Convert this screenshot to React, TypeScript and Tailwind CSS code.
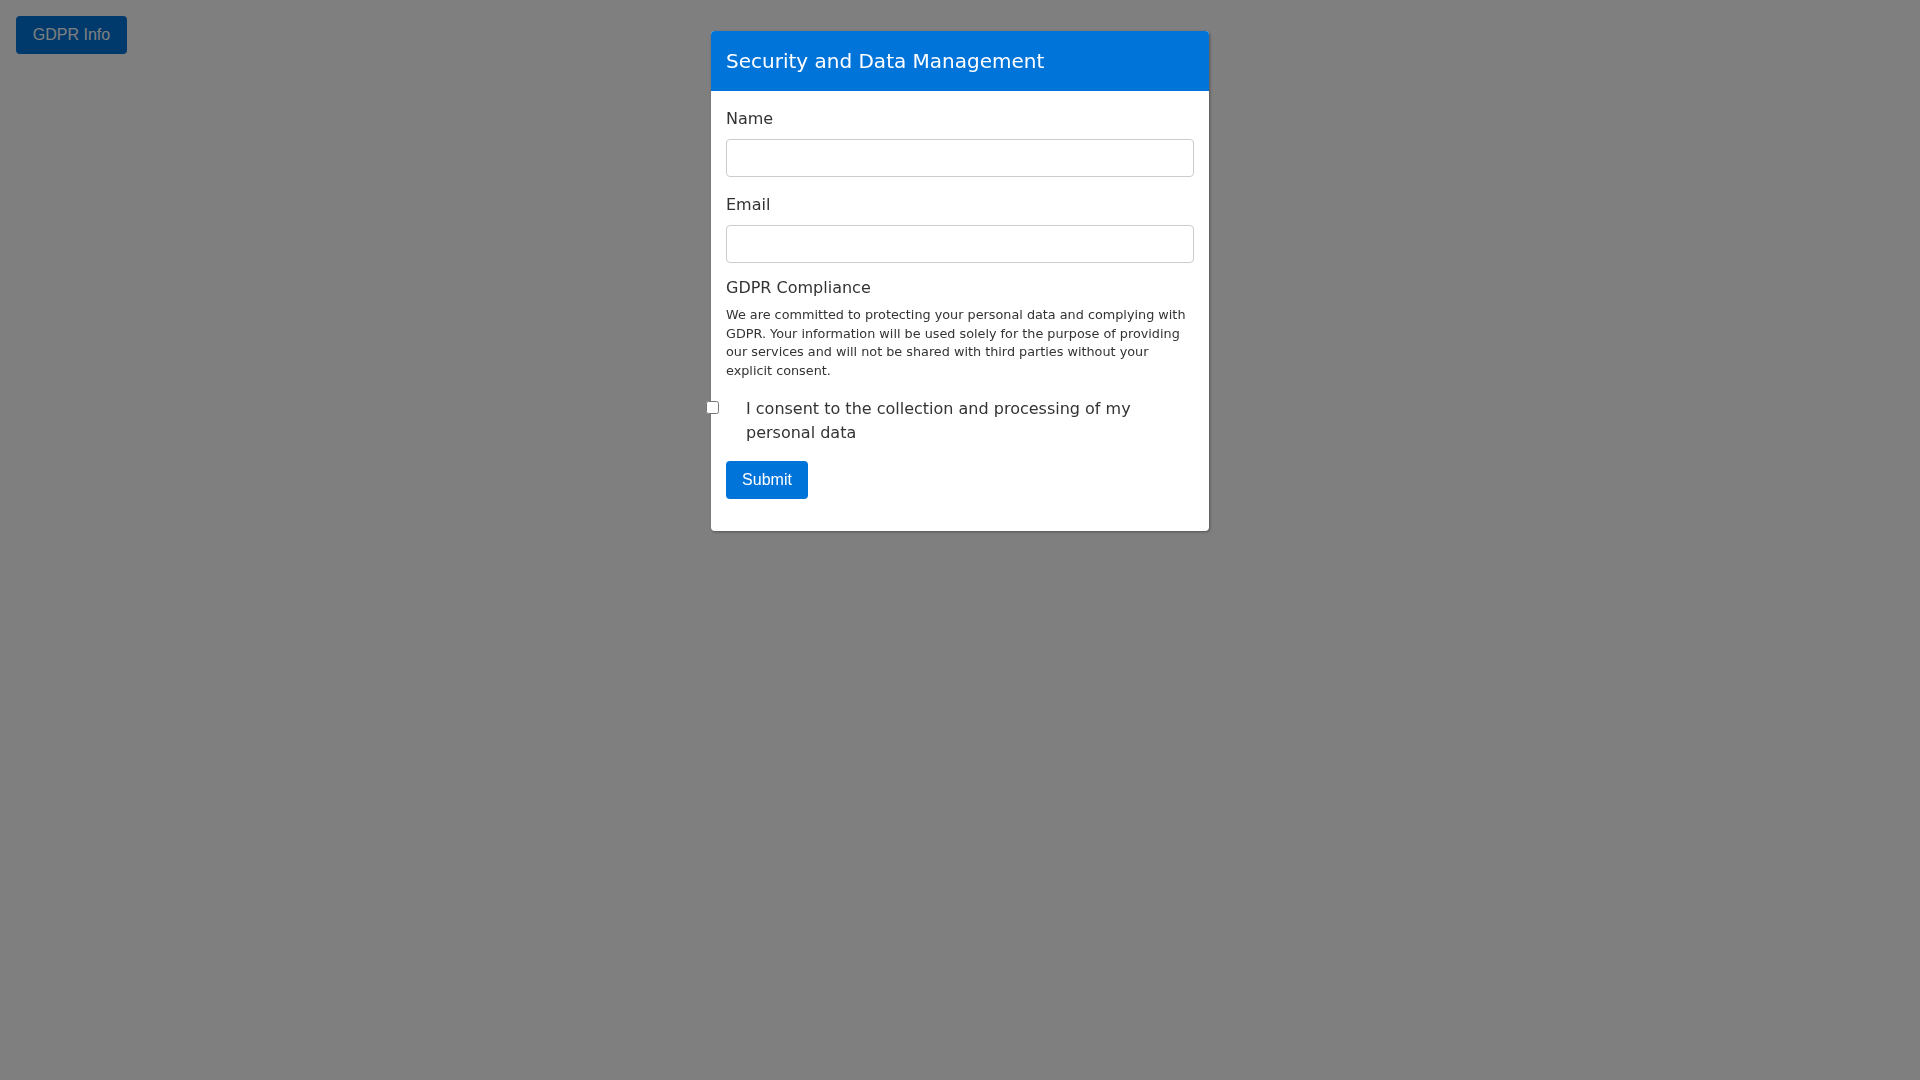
import { useState } from 'react';

const sans = { fontFamily: '"DejaVu Sans", sans-serif' };
const arial = { fontFamily: '"Liberation Sans", Arial, sans-serif' };

export default function App() {
  const [name, setName] = useState('');
  const [email, setEmail] = useState('');
  const [consent, setConsent] = useState(false);

  return (
    <div className="min-h-screen w-full bg-white relative" style={sans}>
      {/* Trigger button (sits under the overlay) */}
      <div className="p-4">
        <button
          className="w-[111px] h-[38px] rounded bg-[#0074d9] text-white text-base"
          style={arial}
        >
          GDPR Info
        </button>
      </div>

      {/* Overlay */}
      <div className="fixed inset-0 bg-black/50 flex justify-center items-start pt-[31px]">
        <div className="w-[498px] bg-white rounded shadow-[1px_1px_3px_rgba(0,0,0,0.35)]">
          {/* Header */}
          <div className="h-[60px] bg-[#0074d9] rounded-t px-[15px] flex items-center">
            <h2 className="text-white text-[20px] leading-6">Security and Data Management</h2>
          </div>

          {/* Body */}
          <form className="px-[15px] pt-4 pb-4 text-[#333]" onSubmit={(e) => e.preventDefault()}>
            <label className="block text-base leading-6 mb-2">Name</label>
            <input
              value={name}
              onChange={(e) => setName(e.target.value)}
              className="block w-full h-[38px] border border-[#ccc] rounded px-2 mb-4 outline-none"
            />

            <label className="block text-base leading-6 mb-2">Email</label>
            <input
              value={email}
              onChange={(e) => setEmail(e.target.value)}
              className="block w-full h-[38px] border border-[#ccc] rounded px-2 mb-[13px] outline-none"
            />

            <h3 className="text-base leading-6">GDPR Compliance</h3>
            <p className="text-[12.8px] leading-[18.7px] mt-[6px] mb-4">
              We are committed to protecting your personal data and complying with GDPR. Your information will be
              used solely for the purpose of providing our services and will not be shared with third parties without
              your explicit consent.
            </p>

            <div className="relative pl-5">
              <input
                type="checkbox"
                checked={consent}
                onChange={(e) => setConsent(e.target.checked)}
                className="absolute left-[-20px] top-[4px] m-0 w-[13px] h-[13px]"
              />
              <label className="block text-base leading-6">
                I consent to the collection and processing of my personal data
              </label>
            </div>

            <button
              type="submit"
              className="mt-4 mb-4 h-[38px] w-[82px] rounded bg-[#0074d9] text-white text-base"
              style={arial}
            >
              Submit
            </button>
          </form>
        </div>
      </div>
    </div>
  );
}
